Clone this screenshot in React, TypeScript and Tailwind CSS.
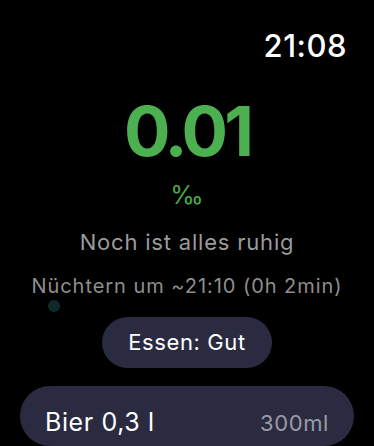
export default function App() {
  return (
    <div
      className="w-[374px] h-[446px] bg-black overflow-hidden flex flex-col text-white"
      style={{ fontFamily: "Inter, 'Noto Sans', sans-serif" }}
    >
      {/* Status bar */}
      <div className="flex justify-end pr-[27px] pt-[30px]">
        <span className="text-[31px] leading-none font-medium tracking-[0.5px]">21:08</span>
      </div>

      {/* BAC value */}
      <div className="flex flex-col items-center mt-[36px]">
        <span className="text-[69px] leading-none font-bold text-[#4cb050] tracking-[-4px]">0.01</span>
        <span className="mt-[17px] text-[25px] leading-none text-[#48a84c]">‰</span>
        <span className="mt-[23px] text-[22px] leading-none text-[#9b9b9b] tracking-[0.8px]">
          Noch ist alles ruhig
        </span>
        <span className="mt-[23px] text-[20px] leading-none text-[#8e8e8e] tracking-[0.95px]">
          Nüchtern um ~21:10 (0h 2min)
        </span>
      </div>

      {/* Page dot */}
      <div className="pl-[48px] mt-[4px]">
        <div className="size-[12px] rounded-full bg-[#0e2a28]" />
      </div>

      {/* Food state */}
      <div className="flex justify-center mt-[5px]">
        <button
          type="button"
          className="w-[170px] h-[51px] rounded-full bg-[#2a2b40] text-[22px] text-white tracking-[0.6px]"
        >
          Essen: Gut
        </button>
      </div>

      {/* Drink row */}
      <div className="mx-[20px] mt-[18px] h-[80px] rounded-[40px] bg-[#2a2b40] flex items-start justify-between px-[25px] pt-[24px]">
        <span className="text-[25px] leading-none tracking-[0.6px]">Bier 0,3 l</span>
        <span className="text-[22px] leading-none text-[#9a9aa6] pt-[2px] tracking-[0.6px]">300ml</span>
      </div>
    </div>
  );
}
